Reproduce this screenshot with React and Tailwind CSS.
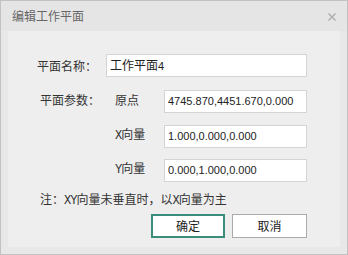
const cjk = { fontFamily: '"Noto Sans CJK SC", "Liberation Sans", sans-serif' };
const num = { fontFamily: 'Tahoma, "Liberation Sans", "Noto Sans CJK SC", sans-serif' };
const mono = { fontFamily: '"Liberation Mono", monospace' };

function Field({ value, className = '' }) {
  return (
    <div
      className={`flex h-[23px] items-center border border-[#d4d4d4] bg-white pl-[3px] text-[11px] text-[#222] ${className}`}
      style={num}
    >
      {value}
    </div>
  );
}

function VectorRow({ axis, value, top }) {
  return (
    <div className={`flex items-start ${top}`}>
      <span className="ml-[107px] w-[49px] pt-[1px] text-[12px] leading-[16px] text-[#333]">
        <span style={mono} className="tracking-[-1px]">{axis}</span>向量
      </span>
      <Field value={value} className="w-[143px]" />
    </div>
  );
}

export default function App() {
  return (
    <div className="flex h-[255px] w-[348px] flex-col border border-[#c2c2c2] bg-[#e8e8e8]" style={cjk}>
      <div className="flex h-[30px] shrink-0 items-center justify-between bg-[#e5e5e5] pl-[11px] pr-[11px]">
        <span className="text-[12px] text-[#666]">编辑工作平面</span>
        <svg width="8" height="8" viewBox="0 0 8 8" className="mt-[1px]">
          <path d="M0.5 0.5 7.5 7.5 M7.5 0.5 0.5 7.5" stroke="#aaa" strokeWidth="1.3" />
        </svg>
      </div>
      <div className="mx-[7px] mb-[7px] flex flex-1 flex-col bg-[#eeeeee]">
        <div className="mt-[23px] flex items-center">
          <span className="ml-[29px] w-[69px] text-[12px] text-[#333]">平面名称：</span>
          <Field value={<span className="text-[12px]" style={cjk}>工作平面<span style={num} className="text-[11px]">4</span></span>} className="w-[201px]" />
        </div>
        <div className="mt-[13px] flex items-start">
          <span className="box-content w-[75px] pl-[32px] pt-[2px] text-[12px] leading-[16px] text-[#333]">平面参数：</span>
          <span className="w-[49px] pt-[2px] text-[12px] leading-[16px] text-[#333]">原点</span>
          <Field value="4745.870,4451.670,0.000" className="w-[143px]" />
        </div>
        <VectorRow axis="X" value="1.000,0.000,0.000" top="mt-[12px]" />
        <VectorRow axis="Y" value="0.000,1.000,0.000" top="mt-[11px]" />
        <div className="mt-[9px] ml-[32px] text-[12px] leading-[16px] text-[#333]">
          注：<span style={mono} className="tracking-[-1px]">XY</span>向量未垂直时，以<span style={mono} className="tracking-[-1px]">X</span>向量为主
        </div>
        <div className="mt-[5px] flex gap-[7px] pl-[143px]">
          <button className="h-[24px] w-[74px] border-2 border-[#3b8c7b] bg-white text-[12px] text-[#222]">确定</button>
          <button className="h-[24px] w-[75px] border border-[#ababab] bg-white text-[12px] text-[#222]">取消</button>
        </div>
      </div>
    </div>
  );
}
